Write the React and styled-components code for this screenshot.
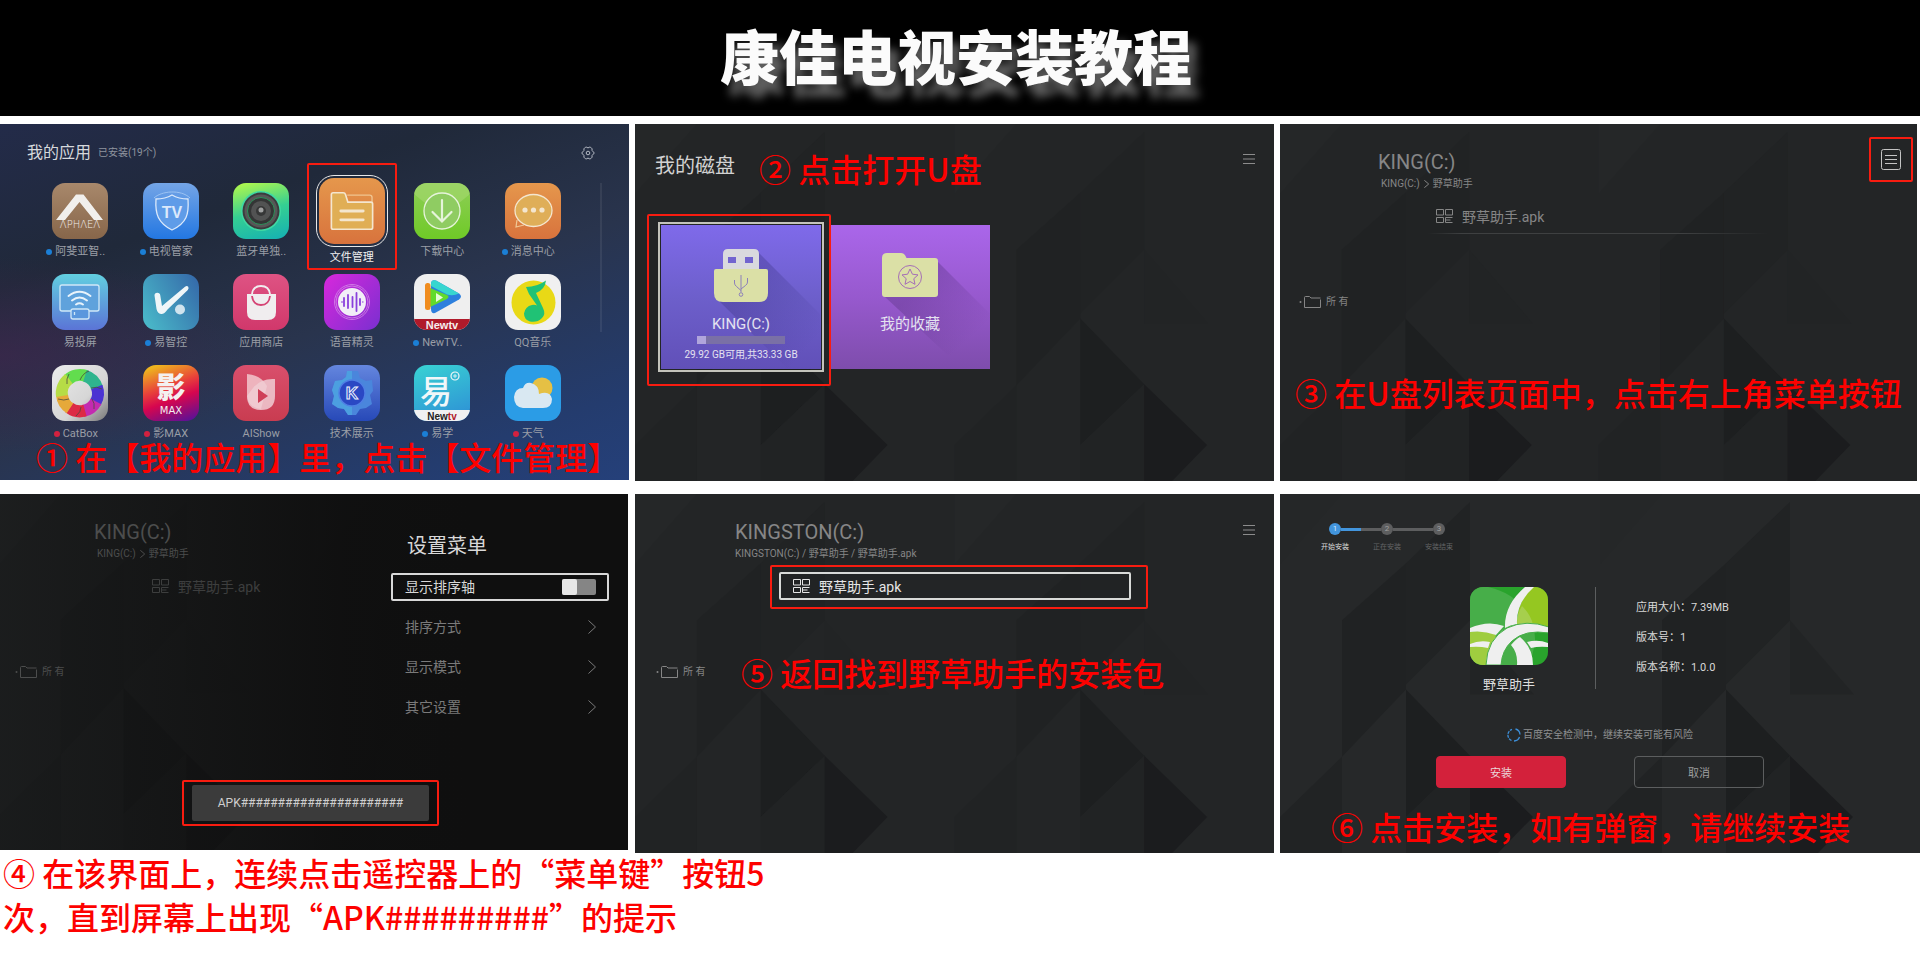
import React from "react";
import styled, { createGlobalStyle, css } from "styled-components";

const GlobalStyle = createGlobalStyle`
    * {
        box-sizing: border-box;
    }
    body {
        margin: 0;
        background: #fff;
        font-family: Roboto, "Noto Sans CJK SC", sans-serif;
    }
    h1, h2, h3, p, ol, ul, figure {
        margin: 0;
        padding: 0;
        font-weight: 400;
    }
    ol, ul {
        list-style: none;
    }
    button {
        font-family: inherit;
        padding: 0;
        border: 0;
        background: none;
        cursor: pointer;
    }
`;

const redFrame = css`
    border: 2px solid #f81c10;
    border-radius: 2px;
`;

/* ---------- page ---------- */

const Banner = styled.header`
    display: flex;
    justify-content: center;
    align-items: center;
    height: 116px;
    padding: 0 8px 6px 0;
    background: #000;
`;
const BannerTitle = styled.h1`
    font-family: "Noto Sans CJK SC", sans-serif;
    font-size: 59px;
    line-height: 80px;
    font-weight: 900;
    color: #fbfbfb;
    text-shadow: 8px 12px 10px rgba(255, 255, 255, 0.4);
`;
const Steps = styled.main`
    display: grid;
    grid-template-columns: 629fr 639fr 640fr;
    align-items: start;
    gap: 13px 6px;
    padding-top: 8px;
`;
const Step = styled.figure`
    min-width: 0;
    padding-right: ${(props) => props.$pr || "0"};
`;
const Screen = styled.section`
    position: relative;
    overflow: hidden;
    background: ${(props) => props.$bg || "#232526"};
`;
const ScreenBody = styled.div`
    position: relative;
    display: flex;
    flex-direction: column;
    padding-bottom: ${(props) => props.$pb || "0"};
`;
const Caption = styled.p`
    font-family: "Noto Sans CJK SC", sans-serif;
    font-size: 32px;
    line-height: ${(props) => props.$lh || "44px"};
    font-weight: 500;
    color: #fd0100;
    padding: ${(props) => props.$p || "0"};
    width: ${(props) => props.$w || "auto"};
    white-space: ${(props) => (props.$w ? "normal" : "nowrap")};
`;
const BackdropSvg = styled.svg`
    position: absolute;
    inset: 0;
    width: 100%;
    height: 100%;
`;
const Shade = styled.div`
    position: absolute;
    inset: 0;
    background: linear-gradient(90deg, rgba(12, 13, 13, 0.35) 0%, rgba(14, 14, 14, 0.92) 55%, #0f0f0f 75%);
`;

function Facets({ x }) {
    return (
        <g transform={`translate(${x} 0)`}>
            <path d="M62 126 126 69V195L62 262Z" fill="#202223" />
            <path d="M126 69 190 8V126L126 190Z" fill="#212324" />
            <path d="M62 0 0 70V0Z" fill="#252728" />
            <path d="M190 126 254 200H190Z" fill="#222425" />
            <path d="M126 195 190 261 126 322Z" fill="#1d1f20" />
            <path d="M126 322 190 261V358H126Z" fill="#212324" />
            <path d="M190 261 253 322 218 358H190Z" fill="#1b1c1e" />
            <path d="M0 322 62 262V358H0Z" fill="#212324" />
        </g>
    );
}

function Backdrop() {
    return (
        <BackdropSvg viewBox="0 0 640 358" preserveAspectRatio="none" aria-hidden="true">
            <Facets x={0} />
            <Facets x={320} />
        </BackdropSvg>
    );
}

/* ---------- step 1: launcher ---------- */

const LauncherHeader = styled.div`
    display: flex;
    align-items: center;
    gap: 7px;
    padding: 17px 34px 0 27px;
    color: #d6d8dc;
    h2 {
        font-size: 16px;
        line-height: 24px;
    }
    span {
        font-size: 10px;
        line-height: 24px;
        color: #8f949e;
    }
    svg {
        margin-left: auto;
    }
`;
const LauncherArea = styled.div`
    display: flex;
    padding: 18px 27px 0 35px;
`;
const AppGrid = styled.ul`
    flex: 1;
    display: grid;
    grid-template-columns: repeat(6, 1fr);
    grid-auto-rows: 76px;
    row-gap: 15px;
`;
const Rail = styled.div`
    width: 2px;
    height: 149px;
    margin-left: 22px;
    background: rgba(255, 255, 255, 0.07);
`;
const AppCell = styled.li`
    position: relative;
    display: flex;
    flex-direction: column;
    align-items: center;
    ${(props) =>
        props.$selected &&
        css`
            &::after {
                content: "";
                position: absolute;
                inset: -20px 0 -11px;
                ${redFrame}
            }
        `}
`;
const AppTile = styled.div`
    flex: none;
    width: 56px;
    height: 56px;
    border-radius: 13px;
    overflow: hidden;
    background: ${(props) => props.$bg};
    svg {
        display: block;
        width: 100%;
        height: 100%;
    }
    ${(props) =>
        props.$selected &&
        css`
            width: 66px;
            height: 66px;
            margin-top: -5px;
            border-radius: 15px;
            outline: 1px solid #e8e8e8;
            outline-offset: 2px;
        `}
`;
const AppName = styled.span`
    position: relative;
    flex: none;
    margin-top: ${(props) => (props.$selected ? "6px" : "5px")};
    font-size: 11px;
    line-height: 16px;
    color: ${(props) => (props.$selected ? "#f0f0f0" : "#9a9ea6")};
    ${(props) =>
        props.$dot &&
        css`
            &::before {
                content: "";
                position: absolute;
                left: -9px;
                top: 5px;
                width: 6px;
                height: 6px;
                border-radius: 50%;
                background: ${props.$dot};
            }
        `}
`;

const blue = "#1b7fd6";
const red = "#d3213f";

const apps = [
    {
        name: "阿斐亚智..",
        dot: blue,
        bg: "linear-gradient(#a8886b, #87664a)",
        art: (
            <>
                <path d="M4 37 24 11.500h7.500L51 37h-9L27.500 19 13 37Z" fill="#f1efec" />
                <text x="28" y="45" textAnchor="middle" fontFamily="DejaVu Sans" fontWeight="200" fontSize="10" fill="#f1efec">
                    ΛPHΛEΛ
                </text>
            </>
        ),
    },
    {
        name: "电视管家",
        dot: blue,
        bg: "linear-gradient(#74a5e6, #2377e2)",
        art: (
            <>
                <path d="M11 15C18 8 38 6 47 15" fill="none" stroke="#9cc3f2" strokeWidth="1" />
                <path
                    d="M29 12c5 3 10 4 16 4 1 15-1 24-16 31C15 40 12 31 13 16c6 0 11-1 16-4Z"
                    fill="#5f9ce8"
                    stroke="#dbe9fb"
                    strokeWidth="1.300"
                />
                <text x="29" y="35" textAnchor="middle" fontFamily="Liberation Sans" fontWeight="700" fontSize="16" fill="#dbe9fb">
                    TV
                </text>
            </>
        ),
    },
    {
        name: "蓝牙单独..",
        bg: "linear-gradient(165deg, #b9fb48, #35cf92 50%, #14b0b4)",
        art: (
            <>
                <circle cx="28" cy="28" r="20" fill="#3fd9a4" />
                <circle cx="28" cy="28" r="18.500" fill="#3b3c3d" />
                <circle cx="28" cy="28" r="16.500" fill="#565757" />
                <circle cx="28" cy="28" r="13.500" fill="#343535" stroke="#27a35f" strokeWidth="0.800" />
                <circle cx="28" cy="28" r="10" fill="#525353" />
                <circle cx="28" cy="28" r="5" fill="#363737" />
                <circle cx="28" cy="27" r="2.500" fill="#a0a1a1" />
            </>
        ),
    },
    {
        name: "文件管理",
        selected: true,
        bg: "linear-gradient(#e5974c, #d8733d)",
        art: (
            <>
                <path d="M24 14.500h19q2 0 2 2v6" fill="none" stroke="#efc48f" strokeWidth="1.200" />
                <path
                    d="M10.500 14q0-1.500 1.500-1.500h8.500q1.500 0 2 1.500l2 6.500h19.500q1.500 0 1.500 1.500v20q0 1.500-1.500 1.500h-32q-1.500 0-1.500-1.500Z"
                    fill="#e0ae55"
                    stroke="#f4e6cf"
                    strokeWidth="1.400"
                />
                <path d="M18.500 28h19M18.500 35.500h19" stroke="#f4e6cf" strokeWidth="2.400" strokeLinecap="round" />
            </>
        ),
    },
    {
        name: "下载中心",
        bg: "linear-gradient(#8fce58, #6fca27)",
        art: (
            <>
                <path d="M0 11 28 34 56 11V0H0Z" fill="#a5d870" opacity="0.600" />
                <circle cx="28" cy="28" r="18" fill="#8fcc62" stroke="#e6f4da" strokeWidth="1.300" />
                <path d="M28 17v21M18.500 29 28 38.500 37.500 29" fill="none" stroke="#e6f4da" strokeWidth="2.200" strokeLinecap="round" />
            </>
        ),
    },
    {
        name: "消息中心",
        dot: blue,
        bg: "linear-gradient(#e5974c, #d8733d)",
        art: (
            <>
                <path d="m12 37-1 7 8-2" fill="none" stroke="#f0c795" strokeWidth="1.200" />
                <ellipse cx="28.500" cy="27.500" rx="18.500" ry="16" fill="#dfae58" stroke="#f4e6cf" strokeWidth="1.300" />
                <circle cx="20" cy="27" r="2.600" fill="#f4e6cf" />
                <circle cx="28.500" cy="27" r="2.600" fill="#f4e6cf" />
                <circle cx="37" cy="27" r="2.600" fill="#f4e6cf" />
            </>
        ),
    },
    {
        name: "易投屏",
        bg: "linear-gradient(#62cfe0, #5b74d6)",
        art: (
            <>
                <rect x="8" y="11" width="39" height="26" rx="2" fill="#5fa2dc" stroke="#cfe8f7" strokeWidth="1.300" />
                <path d="M16.500 22q11-8.500 22 0M20 26.500q7.500-6 15 0M24 30.500q3.500-2.500 7 0" fill="none" stroke="#e8f3fb" strokeWidth="2" strokeLinecap="round" />
                <rect x="19" y="35" width="18" height="10" rx="2" fill="#5a97dd" stroke="#cfe8f7" strokeWidth="1.300" />
                <path d="M22.500 38v3" stroke="#cfe8f7" strokeWidth="1.300" />
            </>
        ),
    },
    {
        name: "易智控",
        dot: blue,
        bg: "linear-gradient(60deg, #4bbecb, #3466a8)",
        art: (
            <>
                <path
                    d="M11.500 21.500q0-2.500 2.800-2.700 2.700 0 3 2.700l1.700 10.500L42 12.800q2-1.500 3.200 0 1 1.500-.4 3.200L24.500 35.500q-3.500 5-6.500 4.500-3.500-.5-4.500-5Z"
                    fill="#eff6f8"
                />
                <circle cx="37" cy="35.500" r="5" fill="#cfe3ee" />
            </>
        ),
    },
    {
        name: "应用商店",
        bg: "linear-gradient(#de5383, #d1386b)",
        art: (
            <>
                <path d="M19 20q1-8 9-8t9 8" fill="none" stroke="#f0edef" strokeWidth="1.800" />
                <path d="M14 20h29v18q0 8-8 8H22q-8 0-8-8Z" fill="#f0edef" />
                <path d="M19 22q1 9 9 9t9-9" fill="none" stroke="#d54475" strokeWidth="1.800" />
            </>
        ),
    },
    {
        name: "语音精灵",
        bg: "linear-gradient(130deg, #d828dc, #7a2fd0)",
        art: (
            <>
                <circle cx="28" cy="28" r="17.500" fill="none" stroke="#d58be8" strokeWidth="0.800" />
                <circle cx="28" cy="28" r="16" fill="none" stroke="#d58be8" strokeWidth="0.800" />
                <circle cx="28" cy="28" r="14" fill="#f2eef7" />
                <path d="M20 24v8M24 21v13M28.500 23v10M32.500 19v18M36 25v6" stroke="#8a3fdc" strokeWidth="1.800" strokeLinecap="round" />
                <path d="M17 28h2M38 28h1.500" stroke="#8a3fdc" strokeWidth="1.200" />
            </>
        ),
    },
    {
        name: "NewTV..",
        dot: blue,
        bg: "#efefef",
        art: (
            <>
                <path d="M17 10q0-5 5-3.500L45 19.500q4 3 0 6L21 39q-4 1-4-4Z" fill="#2d7fdd" />
                <path d="M17 10q0-5 5-3.500L45 19.500q-6 3-12 1L17 12Z" fill="#38d6cf" />
                <path d="M16 14 33 21q3 1.500 0 4L16 33Z" fill="#62da2c" />
                <path d="M22 19v9l7-4.500Z" fill="#e6fbd8" />
                <rect x="11" y="9" width="5.500" height="27" rx="2.500" fill="#f08c1e" />
                <rect y="45" width="56" height="11" fill="#b01a2a" />
                <text x="28" y="54.500" textAnchor="middle" fontFamily="Liberation Sans" fontWeight="700" fontSize="11" fill="#f6eeee">
                    Newtv
                </text>
            </>
        ),
    },
    {
        name: "QQ音乐",
        bg: "#f0f0f0",
        art: (
            <>
                <circle cx="28.500" cy="28.500" r="22" fill="#e9d916" />
                <path
                    d="M21 13q11 0 20-6.500-1 9-10 12.500L38 34q3 6-1 10-5 5-12 3.500-6-2-6-8 1-7 8-8.500 3-.5 5 .5L24 20Z"
                    fill="#20c275"
                />
            </>
        ),
    },
    {
        name: "CatBox",
        dot: red,
        bg: "linear-gradient(135deg, #ececec, #d6d6d6 60%, #777)",
        art: (
            <g fill="none" strokeWidth="12">
                <path d="M16 14.500A18 18 0 0 1 34 11" stroke="#62dd4e" />
                <path d="M33 10.700A18 18 0 0 1 45 23" stroke="#2fb48e" />
                <path d="M44.800 22A18 18 0 0 1 43.500 37.500" stroke="#4b33d2" />
                <path d="M44 36.500A18 18 0 0 1 31 46" stroke="#c32bb0" />
                <path d="M33 45.600A18 18 0 0 1 17 42.500" stroke="#dd2a45" />
                <path d="M18 43.300A18 18 0 0 1 10 30" stroke="#e6a93a" />
                <path d="M10 31A18 18 0 0 1 17 13.800" stroke="#b6dc46" />
                <path
                    d="M17 9q-3 5-2 10M37 6q-6 2-9 9M50 24q-5-3-11-1M42 44q1-6-2-10M24 51q5-4 5-9M6 34q6 2 11 0"
                    stroke="#4b4b3c"
                    strokeWidth="0.800"
                />
            </g>
        ),
    },
    {
        name: "影MAX",
        dot: red,
        bg: "linear-gradient(160deg, #eeb41f 8%, #e8413a 40%, #d6064f 60%, #4b12a0)",
        art: (
            <>
                <text x="28" y="33" textAnchor="middle" fontFamily="Noto Sans CJK SC" fontWeight="900" fontSize="29" fill="#f4f0f0">
                    影
                </text>
                <text x="28" y="49" textAnchor="middle" fontFamily="DejaVu Sans" fontSize="10" fill="#f4f0f0">
                    MAX
                </text>
            </>
        ),
    },
    {
        name: "AIShow",
        bg: "linear-gradient(#d94f6c, #c93c50)",
        art: (
            <>
                <path d="M14 9q14 1 20 12L28 44Q14 42 14 30Z" fill="#eeb3bd" />
                <path d="M42 14q-14-1-22 9l-6 8q0 14 14 14t14-14Z" fill="#f0cdd3" opacity="0.850" />
                <path d="M25 24v14l10-7Z" fill="#cf3f58" />
            </>
        ),
    },
    {
        name: "技术展示",
        bg: "linear-gradient(#6486de, #2749b8)",
        art: (
            <>
                <path
                    d="M23 6h11l2 7 6 3 6-1 1 11-3 4 2 9-6 4-6 1-4 6H24l-4-6-6-1-6-4 2-8-2-6 3-9 7-1 4-3Z"
                    fill="#4a86dc"
                />
                <path d="M23 6h5v44h-4l-4-6-6-1-6-4 2-8-2-6 3-9 7-1 4-3Z" fill="#4fb0e2" opacity="0.600" />
                <circle cx="28" cy="28" r="13" fill="#2a48c4" stroke="#4f7fe4" strokeWidth="1.500" />
                <text x="28" y="34" textAnchor="middle" fontFamily="Liberation Sans" fontWeight="700" fontSize="17" fill="#2a48c4" stroke="#eef2fb" strokeWidth="1">
                    K
                </text>
            </>
        ),
    },
    {
        name: "易学",
        dot: blue,
        bg: "linear-gradient(160deg, #39d3d3, #2d8cd6)",
        art: (
            <>
                <text
                    x="22"
                    y="38"
                    textAnchor="middle"
                    fontFamily="Noto Sans CJK SC"
                    fontWeight="500"
                    fontSize="32"
                    fill="#f1f7f9"
                >
                    易
                </text>
                <circle cx="41" cy="11" r="4" fill="none" stroke="#f1f7f9" strokeWidth="1.200" />
                <path d="M41 9v4M39 11h4" stroke="#f1f7f9" strokeWidth="0.800" />
                <rect y="45" width="56" height="11" fill="#f1f1f1" />
                <text x="28" y="54.500" textAnchor="middle" fontFamily="Liberation Sans" fontWeight="700" fontSize="10" fill="#222">
                    New<tspan fill="#b01a2a">tv</tspan>
                </text>
            </>
        ),
    },
    {
        name: "天气",
        dot: red,
        bg: "#2b9ce6",
        art: (
            <>
                <circle cx="37" cy="23" r="10.500" fill="#e5c044" />
                <path d="M18 43q-9-1-9-11 1-9 9-9 2-6 8-5 8 2 8 11 11-4 13 5 0 9-9 9Z" fill="#d9e8f2" />
            </>
        ),
    },
];

function LauncherStep() {
    return (
        <Step>
            <Screen $bg="radial-gradient(ellipse at 0 65%, rgba(70, 36, 80, 0.55), transparent 30%), linear-gradient(160deg, #232b49 0%, #20293a 28%, #29344d 55%, #243c6e 85%, #25407a)">
                <ScreenBody $pb="9px">
                    <LauncherHeader>
                        <h2>我的应用</h2>
                        <span>已安装(19个)</span>
                        <svg width="14" height="14" viewBox="0 0 14 14" fill="none" stroke="#b5bac4" role="img" aria-label="设置">
                            <path d="M4.500 1.200h1.300L7 2l1.200-.8h1.300l1.600 1.600-.1 1.600L13.300 7 11 9.600l.1 1.600-1.600 1.600H8.200L7 12l-1.200.8H4.500l-1.600-1.600L3 9.600.7 7 3 4.400l-.1-1.600Z" />
                            <circle cx="7" cy="7" r="1.800" />
                        </svg>
                    </LauncherHeader>
                    <LauncherArea>
                        <AppGrid>
                            {apps.map((app) => (
                                <AppCell key={app.name} $selected={app.selected}>
                                    <AppTile $bg={app.bg} $selected={app.selected}>
                                        <svg viewBox="0 0 56 56" aria-hidden="true">
                                            {app.art}
                                        </svg>
                                    </AppTile>
                                    <AppName $dot={app.dot} $selected={app.selected}>
                                        {app.name}
                                    </AppName>
                                </AppCell>
                            ))}
                        </AppGrid>
                        <Rail />
                    </LauncherArea>
                    <Caption $lh="30px" $p="0 0 0 36px">
                        ① 在【我的应用】里，点击【文件管理】
                    </Caption>
                </ScreenBody>
            </Screen>
        </Step>
    );
}

/* ---------- step 2: disks ---------- */

const DiskHeader = styled.div`
    display: flex;
    align-items: flex-start;
    gap: 24px;
    padding: 25px 19px 0 20px;
    h2 {
        font-size: 20px;
        line-height: 34px;
        color: #d2d2d2;
        white-space: nowrap;
    }
`;
const MenuButton = styled.button`
    display: flex;
    align-items: center;
    justify-content: center;
    width: ${(props) => (props.$framed ? "44px" : "13px")};
    height: ${(props) => (props.$framed ? "45px" : "20px")};
    margin-top: ${(props) => props.$mt || "0"};
    margin-left: auto;
    ${(props) => props.$framed && redFrame}
`;
const DiskRow = styled.div`
    display: flex;
    gap: 9px;
    padding: 38px 0 0 26px;
`;
const DiskCard = styled.button`
    position: relative;
    display: flex;
    flex-direction: column;
    align-items: center;
    width: 160px;
    height: 144px;
    padding-top: 24px;
    color: #e4e2f0;
    background: ${(props) => props.$bg};
    strong {
        margin-top: 12px;
        font-size: 15px;
        line-height: 20px;
        font-weight: 400;
    }
    small {
        margin-top: 4px;
        font-size: 10px;
        line-height: 14px;
    }
    > svg {
        overflow: visible;
    }
    ${(props) =>
        props.$selected &&
        css`
            z-index: 1;
            outline: 2px solid #c4c4bc;
            outline-offset: 1px;
            &::after {
                content: "";
                position: absolute;
                inset: -11px -10px -17px -14px;
                ${redFrame}
            }
        `}
`;
const Usage = styled.div`
    width: 88px;
    height: 8px;
    margin-top: 2px;
    background: #7a70a6;
`;
const UsageFill = styled.div`
    height: 100%;
    background: #b0a5dc;
`;

function MenuLines() {
    return (
        <svg width="12" height="10" viewBox="0 0 12 10" stroke="#8c8c8c" aria-hidden="true">
            <path d="M0 .5h12M0 5h12M0 9.500h12" />
        </svg>
    );
}

function DiskStep() {
    const total = 33.33;
    const free = 29.92;
    return (
        <Step>
            <Screen>
                <Backdrop />
                <ScreenBody $pb="112px">
                    <DiskHeader>
                        <h2>我的磁盘</h2>
                        <Caption $lh="38px">② 点击打开U盘</Caption>
                        <MenuButton type="button" aria-label="菜单">
                            <MenuLines />
                        </MenuButton>
                    </DiskHeader>
                    <DiskRow>
                        <DiskCard type="button" $selected $bg="linear-gradient(#7f6aea, #6d5fcb 50%, #6150b8)">
                            <svg width="54" height="53" viewBox="0 0 54 53" aria-hidden="true">
                                <defs>
                                    <linearGradient id="usbShade" x1="0" y1="0" x2="1" y2="1">
                                        <stop offset="0.300" stopColor="#3c3484" stopOpacity="0.350" />
                                        <stop offset="0.850" stopColor="#3c3484" stopOpacity="0" />
                                    </linearGradient>
                                </defs>
                                <path d="M44 3 106 65V120H74L4 51Z" fill="url(#usbShade)" />
                                <path d="M9 22V5q0-5 5-5h26q5 0 5 5v17Z" fill="#d9d9de" />
                                <path d="M14 8h8v6h-8ZM31 8h8v6h-8Z" fill="#7264cf" />
                                <path d="M0 22q0-2 2-2h50q2 0 2 2v22q0 9-9 9H9q-9 0-9-9Z" fill="#dbe0a6" />
                                <g fill="none" stroke="#8c80ba">
                                    <path d="M27 26v17M20.500 31v3q0 2 2 3.500l4.500 4M33.500 29v4q0 2-2 3.500L27 40" />
                                    <circle cx="27" cy="45.500" r="1.800" />
                                </g>
                            </svg>
                            <strong>KING(C:)</strong>
                            <Usage>
                                <UsageFill style={{ width: `${((total - free) / total) * 100}%` }} />
                            </Usage>
                            <small>29.92 GB可用,共33.33 GB</small>
                        </DiskCard>
                        <DiskCard type="button" $bg="linear-gradient(#aa66ea, #9759ce 50%, #7e4dac)">
                            <svg width="56" height="53" viewBox="0 0 56 53" aria-hidden="true">
                                <defs>
                                    <linearGradient id="folderShade" x1="0" y1="0" x2="1" y2="1">
                                        <stop offset="0.300" stopColor="#54307c" stopOpacity="0.350" />
                                        <stop offset="0.800" stopColor="#54307c" stopOpacity="0" />
                                    </linearGradient>
                                </defs>
                                <path d="M55 12 108 65V100L70 110 3 48Z" fill="url(#folderShade)" />
                                <path d="M0 9q0-5 5-5h14q3 0 4.500 3l1 2H53q3 0 3 3v33q0 3-3 3H3q-3 0-3-3Z" fill="#dbe0a6" />
                                <g fill="none" stroke="#a56fb6">
                                    <circle cx="28" cy="28" r="11.500" />
                                    <path d="m28 20 2.400 5.200 5.600.7-4.200 3.800 1.200 5.600-5-2.800-5 2.800 1.200-5.600-4.200-3.800 5.600-.7Z" />
                                </g>
                            </svg>
                            <strong>我的收藏</strong>
                        </DiskCard>
                    </DiskRow>
                </ScreenBody>
            </Screen>
        </Step>
    );
}

/* ---------- steps 3, 4, 5: file browser ---------- */

const BrowserHeader = styled.div`
    display: flex;
    align-items: flex-start;
    height: 70px;
    padding: 13px ${(props) => props.$right || "4px"} 0 ${(props) => props.$indent}px;
    color: ${(props) => props.$color};
`;
const BrowserTitle = styled.div`
    padding-top: 13px;
    h2 {
        font-size: 20px;
        line-height: 24px;
    }
    p {
        display: flex;
        align-items: center;
        gap: 4px;
        font-size: 10px;
        line-height: 20px;
        padding-left: ${(props) => props.$crumbIndent || "0"};
        white-space: nowrap;
    }
`;
const FileRow = styled.div`
    position: relative;
    display: flex;
    align-items: center;
    gap: 9px;
    width: 352px;
    height: 28px;
    margin-top: 8px;
    margin-left: ${(props) => props.$indent + 44}px;
    padding-left: 12px;
    border: 2px solid ${(props) => (props.$selected ? "#d8dad8" : "transparent")};
    border-radius: 2px;
    font-size: 14px;
    white-space: nowrap;
    color: ${(props) => props.$color};
    ${(props) =>
        props.$selected &&
        css`
            &::after {
                content: "";
                position: absolute;
                inset: -9px -19px -11px -11px;
                ${redFrame}
            }
        `}
`;
const RowLine = styled.div`
    width: 340px;
    height: 1px;
    margin: 3px 0 0 ${(props) => props.$indent + 50}px;
    background: linear-gradient(90deg, transparent, #3e4041 10%, #3e4041 75%, transparent);
    visibility: ${(props) => (props.$show ? "visible" : "hidden")};
`;
const CategoryRow = styled.div`
    display: flex;
    align-items: center;
    height: 42px;
    margin-top: 47px;
    padding-left: ${(props) => props.$indent - 79}px;
`;
const Category = styled.div`
    display: flex;
    align-items: center;
    gap: 5px;
    width: 85px;
    font-size: 10px;
    line-height: 16px;
    color: ${(props) => props.$color};
`;

function FileIcon() {
    return (
        <svg width="17" height="14" viewBox="0 0 17 14" fill="none" stroke="currentColor" aria-hidden="true">
            <path d="M.5.500h7v5.500h-7ZM9.500.500h7v5.500h-7ZM.5 8.500h7v5h-7ZM16.500 8.500h-7v5h7M9.500 11h5" />
        </svg>
    );
}

function FolderIcon() {
    return (
        <svg width="22" height="12" viewBox="0 0 22 12" fill="none" stroke="currentColor" aria-hidden="true">
            <circle cx="1.500" cy="6" r="1" fill="currentColor" stroke="none" />
            <path d="M21.500 3.500v8h-16v-10q0-1 1-1h4l1.500 1.500h9.500" />
        </svg>
    );
}

function FileBrowser({ title, crumbs, crumbIndent, indent, color = "#868686", iconColor, selected, line, menu, menuRight, children }) {
    return (
        <>
            <BrowserHeader $indent={indent} $color={color} $right={menuRight}>
                <BrowserTitle $crumbIndent={crumbIndent}>
                    <h2>{title}</h2>
                    <p>{crumbs}</p>
                </BrowserTitle>
                {menu}
            </BrowserHeader>
            <FileRow $indent={indent} $selected={selected} $color={selected ? "#e6e6e6" : iconColor || color}>
                <FileIcon />
                <span>野草助手.apk</span>
            </FileRow>
            <RowLine $indent={indent} $show={line} />
            <CategoryRow $indent={indent}>
                <Category $color={color}>
                    <FolderIcon />
                    <span>所 有</span>
                </Category>
                {children}
            </CategoryRow>
        </>
    );
}

const ChevronSvg = styled.svg`
    flex: none;
    fill: none;
    stroke: currentColor;
`;
function Chevron({ width = 5, height = 8 }) {
    return (
        <ChevronSvg width={width} height={height} viewBox="0 0 8 14" preserveAspectRatio="none" aria-hidden="true">
            <path d="m.5.500 7 6.500-7 6.500" vectorEffect="non-scaling-stroke" />
        </ChevronSvg>
    );
}

const driveCrumbs = (
    <>
        <span>KING(C:)</span>
        <Chevron />
        <span>野草助手</span>
    </>
);

function FolderStep() {
    return (
        <Step $pr="3px">
            <Screen>
                <Backdrop />
                <ScreenBody $pb="67px">
                    <FileBrowser
                        title="KING(C:)"
                        crumbs={driveCrumbs}
                        crumbIndent="3px"
                        indent={98}
                        line
                        menu={
                            <MenuButton type="button" aria-label="菜单" $framed>
                                <svg width="20" height="21" viewBox="0 0 20 21" fill="none" stroke="#c4c4c4" aria-hidden="true">
                                    <rect x=".5" y=".5" width="19" height="20" rx="2" />
                                    <path d="M4 6.500h12M4 10.500h12M4 14.500h12" />
                                </svg>
                            </MenuButton>
                        }
                    />
                    <Caption $p="47px 0 0 15px">③ 在U盘列表页面中，点击右上角菜单按钮</Caption>
                </ScreenBody>
            </Screen>
        </Step>
    );
}

/* ---------- step 4: settings drawer ---------- */

const DrawerLayout = styled.div`
    display: flex;
    justify-content: space-between;
    padding-right: 19px;
`;
const DrawerBrowser = styled.div`
    flex: 1;
    min-width: 0;
`;
const Drawer = styled.div`
    position: relative;
    flex: none;
    width: 218px;
    padding-top: 38px;
    h3 {
        padding-left: 16px;
        margin-bottom: 13px;
        font-size: 20px;
        line-height: 28px;
        color: #d8d8d8;
    }
`;
const DrawerList = styled.div`
    display: flex;
    flex-direction: column;
    gap: 12px;
`;
const DrawerRow = styled.label`
    display: flex;
    align-items: center;
    justify-content: space-between;
    height: 28px;
    padding: 0 11px 0 12px;
    border: 2px solid ${(props) => (props.$selected ? "#d8d8d8" : "transparent")};
    border-radius: 2px;
    font-size: 14px;
    line-height: 22px;
    color: ${(props) => (props.$selected ? "#d8d8d8" : "#7a7a7a")};
`;
const Switch = styled.input`
    appearance: none;
    width: 34px;
    height: 16px;
    margin: 0;
    border-radius: 2px;
    background: #858585;
    &::before {
        content: "";
        display: block;
        width: 15px;
        height: 16px;
        border-radius: 2px;
        background: #e6e6e6;
    }
`;
const ToastFrame = styled.div`
    align-self: flex-start;
    margin: 59px 0 0 182px;
    padding: 3px 8px;
    ${redFrame}
`;
const Toast = styled.div`
    width: 237px;
    padding: 9px 0;
    border-radius: 2px;
    background: #3b3b3b;
    text-align: center;
    font-size: 12px;
    line-height: 18px;
    color: #cfcfcf;
`;

function SettingsStep() {
    return (
        <Step $pr="1px">
            <Screen>
                <Backdrop />
                <Shade />
                <ScreenBody $pb="24px">
                    <DrawerLayout>
                        <DrawerBrowser>
                            <FileBrowser title="KING(C:)" crumbs={driveCrumbs} crumbIndent="3px" indent={94} color="#4c4d4d" iconColor="#3d3e3e" />
                        </DrawerBrowser>
                        <Drawer>
                            <h3>设置菜单</h3>
                            <DrawerList>
                                <DrawerRow $selected>
                                    显示排序轴
                                    <Switch type="checkbox" role="switch" />
                                </DrawerRow>
                                {["排序方式", "显示模式", "其它设置"].map((name) => (
                                    <DrawerRow as="div" key={name}>
                                        {name}
                                        <Chevron width={8} height={14} />
                                    </DrawerRow>
                                ))}
                            </DrawerList>
                        </Drawer>
                    </DrawerLayout>
                    <ToastFrame>
                        <Toast role="status">APK######################</Toast>
                    </ToastFrame>
                </ScreenBody>
            </Screen>
            <Caption as="figcaption" $w="770px" $p="0 0 0 3px">
                ④ 在该界面上，连续点击遥控器上的“菜单键”按钮5次，直到屏幕上出现“APK#########”的提示
            </Caption>
        </Step>
    );
}

/* ---------- step 5 ---------- */

function PackageStep() {
    return (
        <Step>
            <Screen>
                <Backdrop />
                <ScreenBody $pb="160px">
                    <FileBrowser
                        title="KINGSTON(C:)"
                        crumbs="KINGSTON(C:) / 野草助手 / 野草助手.apk"
                        indent={100}
                        selected
                        menuRight="19px"
                        menu={
                            <MenuButton type="button" aria-label="菜单" $mt="13px">
                                <MenuLines />
                            </MenuButton>
                        }
                    >
                        <Caption>⑤ 返回找到野草助手的安装包</Caption>
                    </FileBrowser>
                </ScreenBody>
            </Screen>
        </Step>
    );
}

/* ---------- step 6: installer ---------- */

const Progress = styled.ol`
    display: flex;
    padding: 29px 0 0 29px;
`;
const ProgressItem = styled.li`
    display: flex;
    flex-direction: column;
    align-items: center;
    width: 52px;
    font-size: 7px;
    line-height: 12px;
    color: ${(props) => (props.$active ? "#dcdcdc" : "#626465")};
`;
const ProgressTrack = styled.div`
    display: flex;
    align-items: center;
    align-self: stretch;
    margin-bottom: 6px;
`;
const ProgressLine = styled.span`
    flex: 1;
    height: 3px;
    background: ${(props) => props.$color};
`;
const ProgressDot = styled.span`
    width: 12px;
    height: 12px;
    border-radius: 50%;
    text-align: center;
    font-size: 8px;
    line-height: 12px;
    color: ${(props) => (props.$active ? "#d4e8fa" : "#a0a0a0")};
    background: ${(props) => (props.$active ? "#4295dd" : "#5d5e5f")};
`;
const PackageInfo = styled.div`
    display: flex;
    padding: 34px 0 0 190px;
`;
const PackageName = styled.div`
    display: flex;
    flex-direction: column;
    align-items: center;
    gap: 10px;
    width: 78px;
    font-size: 13px;
    line-height: 20px;
    color: #dedede;
`;
const PackageDivider = styled.div`
    width: 1px;
    height: 102px;
    margin: 0 40px 0 47px;
    background: #5c5e5f;
`;
const PackageMeta = styled.div`
    padding-top: 6px;
    font-size: 11px;
    line-height: 30px;
    color: #d8d8d8;
`;
const ScanNote = styled.p`
    display: flex;
    align-items: center;
    justify-content: center;
    gap: 2px;
    padding-top: 32px;
    font-size: 10px;
    line-height: 16px;
    color: #8e9091;
`;
const ButtonRow = styled.div`
    display: flex;
    justify-content: center;
    gap: 68px;
    padding-top: 13px;
`;
const InstallButton = styled.button`
    width: 130px;
    height: 32px;
    border-radius: 4px;
    border: 1px solid ${(props) => (props.$primary ? "#d3213b" : "#5c5e5f")};
    background: ${(props) => (props.$primary ? "#d3213b" : "transparent")};
    font-size: 11px;
    color: ${(props) => (props.$primary ? "#ead6d9" : "#9c9e9f")};
`;

const gray = "#5d5e5f";
const phases = [
    { label: "开始安装", before: "transparent", after: "#4295dd", active: true },
    { label: "正在安装", before: gray, after: gray },
    { label: "安装结束", before: gray, after: "transparent" },
];

function GrassLogo() {
    return (
        <svg width="78" height="78" viewBox="0 0 78 78" aria-hidden="true">
            <defs>
                <clipPath id="grassClip">
                    <rect width="78" height="78" rx="13" />
                </clipPath>
            </defs>
            <g clipPath="url(#grassClip)">
                <rect width="78" height="78" fill="#29a32c" />
                <path d="M0 0h18q24 5 38 24 10 16 9 32L60 78H0Z" fill="#47ae49" />
                <path d="M63 0h15v44q-14-8-30-5-3-22 15-39Z" fill="#95c721" />
                <path d="M52 19q9 9 11 19-8-2-16-.5-.5-10 5-18.500Z" fill="#a6cf4d" />
                <path d="M0 45q15-3 26 3L17 78H0Z" fill="#9fcd3f" />
                <path d="M55 0h9Q46 16 47 37q-7 1-12 4-1-23 20-41Z" fill="#efefef" />
                <path d="M0 41q18-8 34-2l-8 9q-13-5-26-3Z" fill="#efefef" />
                <path d="M0 57q9-4 20-2l-2 6q-9-2-18-1Z" fill="#efefef" />
                <path d="M16 78q1-26 21-37 19-9 42-1v6q-24-4-37 8-10 9-11 24Z" fill="#efefef" stroke="#47ae49" strokeWidth="1" />
                <path d="M41 58q5-6 9-8 13 11 13 28H47q1-12-6-20Z" fill="#efefef" />
                <path d="M57 55q11-3 21 1v4q-9-1-17 1Z" fill="#efefef" />
            </g>
        </svg>
    );
}

function InstallStep() {
    return (
        <Step>
            <Screen $bg="#262829">
                <Backdrop />
                <ScreenBody $pb="5px">
                    <Progress>
                        {phases.map((phase, i) => (
                            <ProgressItem key={phase.label} $active={phase.active}>
                                <ProgressTrack>
                                    <ProgressLine $color={phase.before} />
                                    <ProgressDot $active={phase.active}>{i + 1}</ProgressDot>
                                    <ProgressLine $color={phase.after} />
                                </ProgressTrack>
                                {phase.label}
                            </ProgressItem>
                        ))}
                    </Progress>
                    <PackageInfo>
                        <PackageName>
                            <GrassLogo />
                            野草助手
                        </PackageName>
                        <PackageDivider />
                        <PackageMeta>
                            <p>应用大小：7.39MB</p>
                            <p>版本号：1</p>
                            <p>版本名称：1.0.0</p>
                        </PackageMeta>
                    </PackageInfo>
                    <ScanNote>
                        <svg width="14" height="14" viewBox="0 0 14 14" fill="none" stroke="#3d8fd8" strokeWidth="1.300" aria-hidden="true">
                            <path d="M8.500 1A6 6 0 0 1 13 6.500M12.500 9A6 6 0 0 1 7 13" />
                            <path d="M4.500 12.500A6 6 0 0 1 5 1.300" strokeDasharray="3 1" />
                        </svg>
                        百度安全检测中，继续安装可能有风险
                    </ScanNote>
                    <ButtonRow>
                        <InstallButton type="button" $primary>
                            安装
                        </InstallButton>
                        <InstallButton type="button">取消</InstallButton>
                    </ButtonRow>
                    <Caption $p="16px 0 0 51px">⑥ 点击安装，如有弹窗，请继续安装</Caption>
                </ScreenBody>
            </Screen>
        </Step>
    );
}

function App() {
    return (
        <div lang="zh-CN">
            <GlobalStyle />
            <Banner>
                <BannerTitle>康佳电视安装教程</BannerTitle>
            </Banner>
            <Steps>
                <LauncherStep />
                <DiskStep />
                <FolderStep />
                <SettingsStep />
                <PackageStep />
                <InstallStep />
            </Steps>
        </div>
    );
}

export default App;
